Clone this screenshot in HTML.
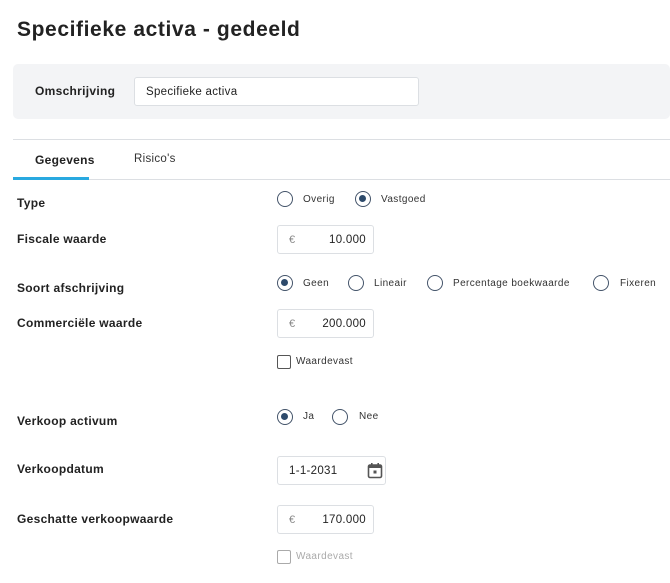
<!DOCTYPE html>
<html><head><style>
*{box-sizing:border-box;margin:0;padding:0}
body{width:670px;height:583px;background:#fff;font-family:"Liberation Sans",sans-serif;color:#222;position:relative;overflow:hidden}
.a{position:absolute;white-space:nowrap}
h1{position:absolute;left:17px;top:18px;font-size:21px;font-weight:bold;color:#222;letter-spacing:0.6px}
.lbl{font-size:12px;font-weight:bold;color:#222;letter-spacing:0.3px}
.t{font-size:10px;color:#333;letter-spacing:0.4px}
.r{position:absolute;width:16px;height:16px;border:1.5px solid #44546a;border-radius:50%}
.r.on::after{content:"";position:absolute;left:3px;top:3px;width:7px;height:7px;border-radius:50%;background:#2d4a6b}
.inp{position:absolute;border:1px solid #dcdfe3;border-radius:3px;background:#fff;height:29px}
.eu{position:absolute;left:11px;top:8px;font-size:11px;color:#888}
.v{position:absolute;right:7px;top:8px;font-size:11.5px;color:#222;letter-spacing:0.3px}
.cb{position:absolute;width:14px;height:14px;border:1px solid #555;border-radius:2px}
</style></head><body>
<h1>Specifieke activa - gedeeld</h1>
<div class="a" style="left:13px;top:64px;width:657px;height:55px;background:#f3f4f6;border-radius:5px"></div>
<div class="a lbl" style="left:35px;top:84px">Omschrijving</div>
<div class="inp" style="left:134px;top:77px;width:285px"><span class="a" style="left:11px;top:8px;font-size:11.5px;letter-spacing:0.3px">Specifieke activa</span></div>
<div class="a" style="left:13px;top:139px;width:657px;height:1px;background:#dcdfe3"></div>
<div class="a lbl" style="left:35px;top:153px">Gegevens</div>
<div class="a" style="left:134px;top:153px;font-size:11.5px;color:#333;letter-spacing:0.3px">Risico's</div>
<div class="a" style="left:13px;top:179px;width:657px;height:1px;background:#dcdfe3"></div>
<div class="a" style="left:13px;top:177px;width:76px;height:3px;background:#29a9e0"></div>

<div class="a lbl" style="left:17px;top:196px">Type</div>
<div class="r" style="left:277px;top:191px"></div><div class="a t" style="left:303px;top:194px">Overig</div>
<div class="r on" style="left:355px;top:191px"></div><div class="a t" style="left:381px;top:194px">Vastgoed</div>

<div class="a lbl" style="left:17px;top:232px">Fiscale waarde</div>
<div class="inp" style="left:277px;top:225px;width:97px"><span class="eu">€</span><span class="v">10.000</span></div>

<div class="a lbl" style="left:17px;top:281px">Soort afschrijving</div>
<div class="r on" style="left:277px;top:275px"></div><div class="a t" style="left:303px;top:278px">Geen</div>
<div class="r" style="left:348px;top:275px"></div><div class="a t" style="left:374px;top:278px">Lineair</div>
<div class="r" style="left:427px;top:275px"></div><div class="a t" style="left:453px;top:278px">Percentage boekwaarde</div>
<div class="r" style="left:593px;top:275px"></div><div class="a t" style="left:620px;top:278px">Fixeren</div>

<div class="a lbl" style="left:17px;top:316px">Commerciële waarde</div>
<div class="inp" style="left:277px;top:309px;width:97px"><span class="eu">€</span><span class="v">200.000</span></div>
<div class="cb" style="left:277px;top:355px"></div><div class="a t" style="left:296px;top:356px">Waardevast</div>

<div class="a lbl" style="left:17px;top:414px">Verkoop activum</div>
<div class="r on" style="left:277px;top:409px"></div><div class="a t" style="left:303px;top:411px">Ja</div>
<div class="r" style="left:332px;top:409px"></div><div class="a t" style="left:359px;top:411px">Nee</div>

<div class="a lbl" style="left:17px;top:462px">Verkoopdatum</div>
<div class="inp" style="left:277px;top:456px;width:109px"><span class="a" style="left:11px;top:8px;font-size:11.5px;letter-spacing:0.3px">1-1-2031</span>
<svg class="a" style="left:89px;top:5px" width="16" height="17" viewBox="0 0 16 17"><rect x="1.5" y="3" width="13" height="12.5" rx="1.5" fill="none" stroke="#555" stroke-width="1.6"/><rect x="1.5" y="3" width="13" height="3" fill="#555"/><rect x="4" y="1" width="1.6" height="3" fill="#555"/><rect x="10.4" y="1" width="1.6" height="3" fill="#555"/><rect x="6.5" y="8.5" width="3" height="3" fill="#555"/></svg></div>

<div class="a lbl" style="left:17px;top:512px">Geschatte verkoopwaarde</div>
<div class="inp" style="left:277px;top:505px;width:97px"><span class="eu">€</span><span class="v">170.000</span></div>
<div class="cb" style="left:277px;top:550px;border-color:#aaa"></div><div class="a t" style="left:296px;top:551px;color:#aaa">Waardevast</div>
</body></html>
